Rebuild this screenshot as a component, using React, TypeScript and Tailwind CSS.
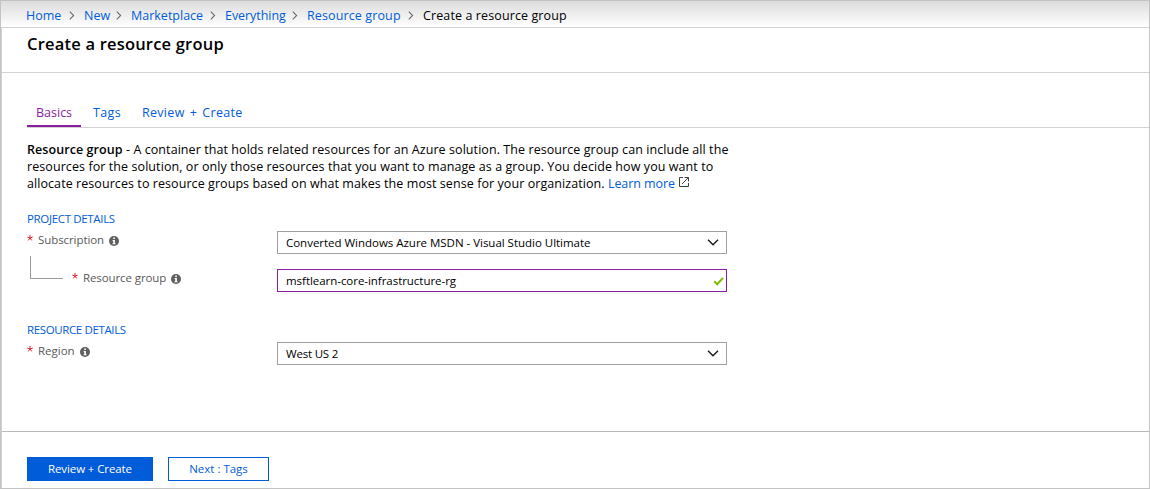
import type { ReactNode } from 'react';

const crumbs = [
  { label: 'Home', cls: 'w-[58px]' },
  { label: 'New', cls: 'w-[47px]' },
  { label: 'Marketplace', cls: 'w-[94px]' },
  { label: 'Everything', cls: 'w-[82px] tracking-[-0.05px]' },
  { label: 'Resource group', cls: 'w-[116px] tracking-[0.12px]' },
];

function CrumbChevron() {
  return (
    <svg width="6" height="9" viewBox="0 0 6 9" fill="none" stroke="#6b6b6b" strokeWidth="1.1" className="mr-[9px] shrink-0 -translate-y-px">
      <path d="M0.8 0.7 L4.6 4.5 L0.8 8.3" />
    </svg>
  );
}

function DownChevron() {
  return (
    <svg width="12" height="7" viewBox="0 0 12 7" fill="none" stroke="#1a1a1a" strokeWidth="1.4" className="mr-[7px] shrink-0">
      <path d="M1 0.8 L6 5.7 L11 0.8" />
    </svg>
  );
}

function Check() {
  return (
    <svg width="11" height="9" viewBox="0 0 11 9" fill="none" stroke="#7fba00" strokeWidth="2" className="mr-[2px] mt-px shrink-0">
      <path d="M1.2 4.3 L4.2 7.2 L10 0.9" />
    </svg>
  );
}

function Info() {
  return (
    <svg width="10" height="10" viewBox="0 0 10 10" className="mt-[2px] shrink-0">
      <circle cx="5" cy="5" r="5" fill="#5f5f5f" />
      <path d="M4.2 1.5h1.7v1.5H4.2zM3.6 4h2.3v3.3h.7v1H3.5v-1h.7V5h-.6z" fill="#fff" />
    </svg>
  );
}

function External() {
  return (
    <svg width="10" height="10" viewBox="0 0 10 10" fill="none" stroke="#404040" strokeWidth="1" className="ml-[4px] inline-block align-[1px]">
      <path d="M4 0.5H0.5V9.5H9.5V6M5.5 0.5H9.5V4.5M9.3 0.7L3 7" />
    </svg>
  );
}

function Star() {
  return (
    <svg width="6" height="6" viewBox="0 0 6 6" stroke="#e5202e" strokeWidth="1" className="mb-[5px] shrink-0">
      <path d="M3 0V3M3 3L0.3 2.1M3 3L5.7 2.1M3 3L1.3 5.4M3 3L4.7 5.4" fill="none" />
    </svg>
  );
}

function Label({ children, gap, className = '' }: { children: ReactNode; gap: string; className?: string }) {
  return (
    <div className={`flex h-[18px] items-center text-[11.5px] text-[#595959] ${className}`}>
      <Star />
      <span className={`ml-[5px] whitespace-nowrap ${gap}`}>{children}</span>
      <Info />
    </div>
  );
}

function Field({ children, active, icon }: { children: ReactNode; active?: boolean; icon: ReactNode }) {
  return (
    <div className={`flex h-[23px] w-[450px] items-center justify-between border bg-white pl-2 text-[11.5px] text-black ${active ? 'border-[#881da0]' : 'border-[#a0a0a0]'}`}>
      {children}
      {icon}
    </div>
  );
}

export default function App() {
  return (
    <div className="flex h-[489px] w-[1150px] flex-col overflow-hidden border border-[#c3c3c3] bg-white font-['Open_Sans','Noto_Sans',sans-serif] text-[12.5px] text-black">
      <nav className="flex h-[27px] shrink-0 items-center border-b border-[#d2d2d2] bg-linear-to-b from-[#dcdcdc] to-white pl-[25px] pt-[5px] text-[#015cda]">
        {crumbs.map((c) => (
          <div key={c.label} className={`flex shrink-0 items-center justify-between whitespace-nowrap ${c.cls}`}>
            <a>{c.label}</a>
            <CrumbChevron />
          </div>
        ))}
        <span className="tracking-[0.11px] text-black">Create a resource group</span>
      </nav>

      <div className="flex min-h-0 grow flex-col border-l border-[#d2d2d2]">
        <header className="h-[45px] shrink-0 border-b border-[#d2d2d2] pl-[25px] pt-[4px]">
          <h1 className="text-[16.5px] font-semibold leading-[24px] tracking-[0.2px]">Create a resource group</h1>
        </header>

        <main className="h-[359px] shrink-0 border-b border-[#b9b9b9] pl-[25px]">
          <div className="mt-[27px] flex h-[28px] border-b border-[#d2d2d2] text-[#015cda]">
            <div className="-mb-px h-[27px] w-[54px] border-b-2 border-[#881da0] pl-[9px] pt-[3px] leading-[19px] text-[#881da0]">Basics</div>
            <div className="ml-3 pt-[3px] leading-[19px] tracking-[0.35px]">Tags</div>
            <div className="ml-[21px] pt-[3px] leading-[19px] tracking-[0.3px] [word-spacing:1.6px]">Review + Create</div>
          </div>

          <p className="mt-[13px] whitespace-nowrap leading-[17px] tracking-[0.07px]">
            <b className="font-semibold tracking-[0.08px]">Resource group</b> - A container that holds related resources for an Azure solution. The resource group can include all the
            <br />
            <span className="tracking-[0.08px]">resources for the solution, or only those resources that you want to manage as a group. You decide how you want to</span>
            <br />
            allocate resources to resource groups based on what makes the most sense for your organization.{' '}
            <a className="tracking-[-0.07px] text-[#015cda]">Learn more</a>
            <External />
          </p>

          <h2 className="mt-[18px] text-[11.5px] leading-[18px] tracking-[-0.34px] text-[#015cda]">PROJECT DETAILS</h2>
          <div className="mt-[3px] flex">
            <div className="w-[250px]">
              <Label gap="mr-[5px] tracking-[-0.08px]">Subscription</Label>
            </div>
            <Field icon={<DownChevron />}><span className="tracking-[-0.02px]">Converted Windows Azure MSDN - Visual Studio Ultimate</span></Field>
          </div>
          <div className="mt-[2px] flex h-[36px]">
            <div className="flex w-[250px]">
              <div className="ml-[3px] h-[23px] w-[33px] border-b border-l border-[#9b9b9b]" />
              <Label gap="mr-[5px] tracking-[-0.1px]" className="ml-[9px] mt-[13px]">Resource group</Label>
            </div>
            <div className="mt-[13px]">
              <Field active icon={<Check />}><span className="tracking-[-0.04px]">msftlearn-core-infrastructure-rg</span></Field>
            </div>
          </div>

          <h2 className="mt-[29px] text-[11.5px] leading-[18px] tracking-[-0.37px] text-[#015cda]">RESOURCE DETAILS</h2>
          <div className="mt-[3px] flex">
            <div className="w-[250px]">
              <Label gap="mr-[5px]">Region</Label>
            </div>
            <Field icon={<DownChevron />}><span className="tracking-[-0.2px]">West US 2</span></Field>
          </div>
        </main>

        <footer className="flex pl-[25px] pt-[25px] text-[11.5px]">
          <button className="h-[24px] w-[126px] bg-[#015cda] tracking-[-0.1px] text-white">Review + Create</button>
          <button className="ml-[15px] h-[24px] w-[101px] border border-[#015cda] bg-white text-[#015cda]">Next : Tags</button>
        </footer>
      </div>
    </div>
  );
}
